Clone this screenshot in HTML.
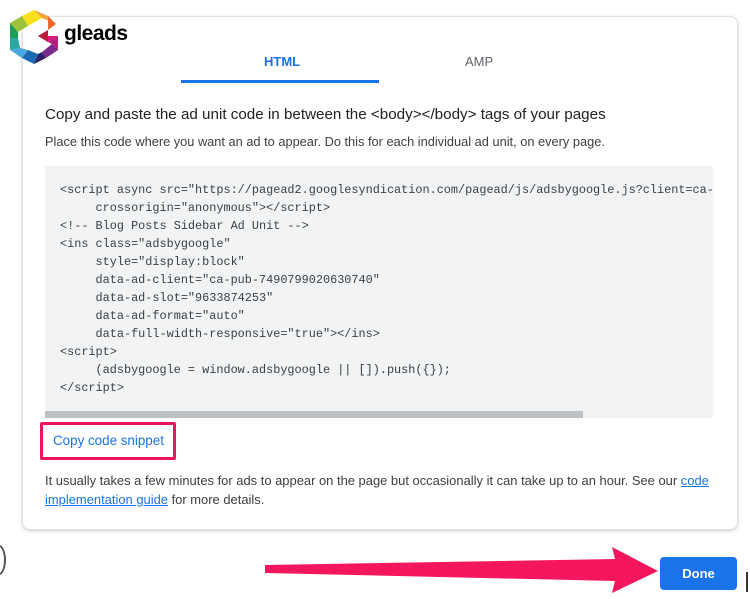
<!DOCTYPE html>
<html><head><style>
body{margin:0;width:750px;height:599px;background:#fff;position:relative;overflow:hidden;font-family:"Liberation Sans",sans-serif;color:#3c4043}
.card{position:absolute;left:22px;top:16px;width:714px;height:512px;border:1px solid #e0e0e0;border-radius:8px;box-shadow:0 1px 3px rgba(0,0,0,.2)}
.a{position:absolute;white-space:nowrap}
pre{margin:0;font-family:"Liberation Mono",monospace;font-size:11.85px;line-height:18px;color:#3c4043}
</style></head><body>
<div class="card"></div>
<svg class="a" style="left:8px;top:8px" width="52" height="56" viewBox="0 0 52 56">
<polygon points="26,2 14,8 20,18 34,10" fill="#f7e01c"/>
<polygon points="14,8 2,15 10,24 20,18" fill="#9cc23c"/>
<polygon points="34,10 26,2 40,8 48,16" fill="#f6a23a"/>
<polygon points="40,8 48,16 40,22" fill="#ee6a2a"/>
<polygon points="2,15 2,30 10,30 10,24" fill="#1e9e54"/>
<polygon points="2,30 2,42 12,40 10,30" fill="#2aa7a0"/>
<polygon points="2,42 14,50 20,42 12,40" fill="#4aa8dc"/>
<polygon points="14,50 26,56 30,46 20,42" fill="#1d6ab4"/>
<polygon points="26,56 38,50 34,44 30,46" fill="#2a2368"/>
<polygon points="38,50 50,42 44,36 34,44" fill="#7a2a8c"/>
<polygon points="50,42 50,28 40,34 44,36" fill="#b0207c"/>
<polygon points="50,28 30,28 40,34" fill="#e2157c"/>
<polygon points="30,28 40,34 40,22" fill="#b81e3c"/>
</svg>
<div class="a" style="left:64px;top:22px;font-size:21px;font-weight:bold;color:#000;letter-spacing:-0.5px">gleads</div>
<div class="a" style="left:264px;top:54px;font-size:13px;color:#1a73e8;font-weight:bold">HTML</div>
<div class="a" style="left:181px;top:80px;width:198px;height:3px;background:#1a73e8"></div>
<div class="a" style="left:465px;top:54px;font-size:13px;color:#5f6368">AMP</div>
<div class="a" style="left:45px;top:106px;font-size:15.2px;color:#202124">Copy and paste the ad unit code in between the &lt;body&gt;&lt;/body&gt; tags of your pages</div>
<div class="a" style="left:45px;top:134px;font-size:12.8px;color:#3c4043">Place this code where you want an ad to appear. Do this for each individual ad unit, on every page.</div>
<div class="a" style="left:45px;top:166px;width:668px;height:252px;background:#f1f3f4;overflow:hidden">
<pre style="position:absolute;left:15px;top:15px">&lt;script async src="https://pagead2.googlesyndication.com/pagead/js/adsbygoogle.js?client=ca-
     crossorigin="anonymous"&gt;&lt;/script&gt;
&lt;!-- Blog Posts Sidebar Ad Unit --&gt;
&lt;ins class="adsbygoogle"
     style="display:block"
     data-ad-client="ca-pub-7490799020630740"
     data-ad-slot="9633874253"
     data-ad-format="auto"
     data-full-width-responsive="true"&gt;&lt;/ins&gt;
&lt;script&gt;
     (adsbygoogle = window.adsbygoogle || []).push({});
&lt;/script&gt;</pre>
<div class="a" style="left:0;top:245px;width:538px;height:7px;background:#bdc1c6"></div>
</div>
<div class="a" style="left:40px;top:422px;height:32px;border:3px solid #e8175d;border-radius:2px;width:130px"></div>
<div class="a" style="left:53px;top:433px;font-size:13.4px;color:#1a73e8">Copy code snippet</div>
<div class="a" style="left:45px;top:471px;font-size:12.95px;line-height:19px">It usually takes a few minutes for ads to appear on the page but occasionally it can take up to an hour. See our <span style="color:#1a73e8;text-decoration:underline">code</span><br><span style="color:#1a73e8;text-decoration:underline">implementation guide</span> for more details.</div>
<svg class="a" style="left:260px;top:545px" width="400" height="50"><polygon points="5,20 355,14 352,2 398,26 352,48 355,36 5,28" fill="#f5175d"/></svg>
<div class="a" style="left:660px;top:557px;width:77px;height:33px;background:#1a73e8;border-radius:4px;color:#fff;font-size:13px;font-weight:bold;text-align:center;line-height:33px">Done</div>
<div class="a" style="left:-8px;top:545px;width:10px;height:26px;border:2px solid #555;border-radius:50%"></div>
<div class="a" style="left:746px;top:572px;width:2px;height:20px;background:#333"></div>
</body></html>
